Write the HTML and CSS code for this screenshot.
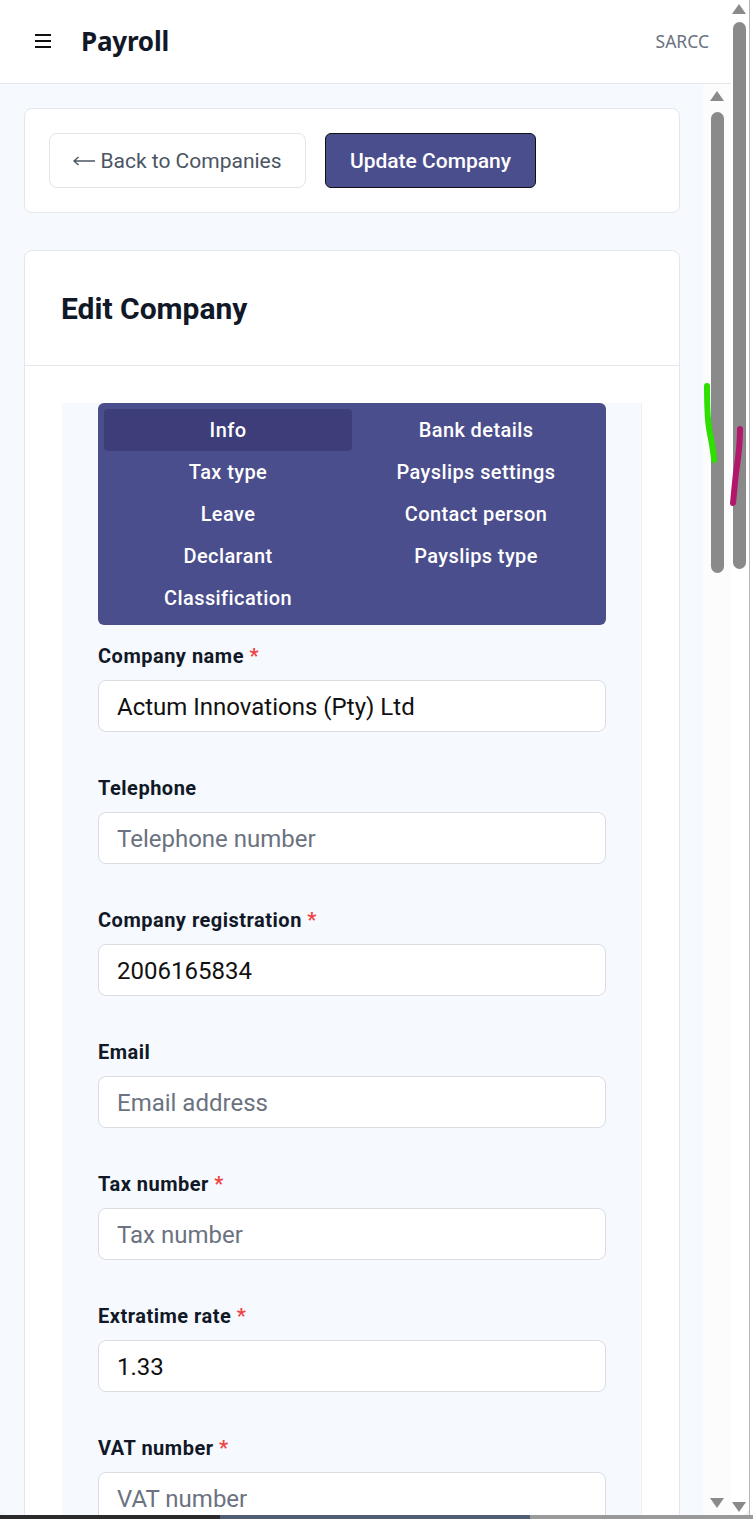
FILE: index.html
```html
<!DOCTYPE html>
<html lang="en">
<head>
<meta charset="utf-8">
<title>Payroll - Edit Company</title>
<link rel="stylesheet" href="styles.css">
</head>
<body>
<div class="desktop">
  <div class="window">
    <div class="app">
      <header class="topbar">
        <div class="brand">
          <svg class="menu-icon" width="18" height="16" viewBox="0 0 18 16" aria-hidden="true">
            <rect x="1" y="1" width="16" height="2" fill="#111"/>
            <rect x="1" y="7" width="16" height="2" fill="#111"/>
            <rect x="1" y="13" width="16" height="2" fill="#111"/>
          </svg>
          <span class="title">Payroll</span>
        </div>
        <span class="org">SARCC</span>
      </header>
      <div class="main">
        <div class="content">
          <div class="card actions">
            <button class="btn btn-outline"><svg class="back-arrow" width="22" height="10" viewBox="0 0 22 10" aria-hidden="true"><path d="M1 5 H22 M5.5 1 L1 5 L5.5 9" stroke="#4b5563" stroke-width="1.4" fill="none"/></svg>Back to Companies</button>
            <button class="btn btn-primary">Update Company</button>
          </div>
          <div class="card edit">
            <div class="card-head"><h1>Edit Company</h1></div>
            <div class="card-body">
              <div class="section">
                <div class="tabs">
                  <div class="tab active">Info</div>
                  <div class="tab">Bank details</div>
                  <div class="tab">Tax type</div>
                  <div class="tab">Payslips settings</div>
                  <div class="tab">Leave</div>
                  <div class="tab">Contact person</div>
                  <div class="tab">Declarant</div>
                  <div class="tab">Payslips type</div>
                  <div class="tab">Classification</div>
                </div>
                <div class="field">
                  <label>Company name <span class="req">*</span></label>
                  <div class="input">Actum Innovations (Pty) Ltd</div>
                </div>
                <div class="field">
                  <label>Telephone</label>
                  <div class="input placeholder">Telephone number</div>
                </div>
                <div class="field">
                  <label>Company registration <span class="req">*</span></label>
                  <div class="input">2006165834</div>
                </div>
                <div class="field">
                  <label>Email</label>
                  <div class="input placeholder">Email address</div>
                </div>
                <div class="field">
                  <label>Tax number <span class="req">*</span></label>
                  <div class="input placeholder">Tax number</div>
                </div>
                <div class="field">
                  <label>Extratime rate <span class="req">*</span></label>
                  <div class="input">1.33</div>
                </div>
                <div class="field">
                  <label>VAT number <span class="req">*</span></label>
                  <div class="input placeholder">VAT number</div>
                </div>
              </div>
            </div>
          </div>
        </div>
        <div class="vscroll inner">
          <span class="arrow up"></span>
          <span class="thumb"></span>
          <span class="spacer"></span>
          <span class="arrow down"></span>
        </div>
      </div>
    </div>
    <div class="vscroll outer">
      <span class="arrow up"></span>
      <span class="thumb"></span>
      <span class="spacer"></span>
      <span class="arrow down"></span>
    </div>
  </div>
  <div class="behind"></div>
  <svg class="marks" width="60" height="140" viewBox="0 0 60 140" aria-hidden="true">
    <path d="M7 8 C7 30 7.5 40 9 50 C10.5 60 13 68 14 82" stroke="#2de000" stroke-width="6" fill="none" stroke-linecap="round"/>
    <path d="M40 51 C40 70 38 82 36 95 C34.5 108 34 116 33 125" stroke="#b3176b" stroke-width="6" fill="none" stroke-linecap="round"/>
  </svg>
</div>
<div class="taskbar"></div>
</body>
</html>
```

FILE: styles.css
```css
* { box-sizing: border-box; }
html, body { margin: 0; padding: 0; }
body {
  width: 753px;
  height: 1519px;
  overflow: hidden;
  background: #2a2a2a;
  font-family: Roboto, "Liberation Sans", sans-serif;
}
.desktop {
  position: relative;
  display: flex;
  height: 1515px;
  background: #f3f3f3;
}
.window {
  width: 749px;
  height: 1515px;
  display: flex;
  background: #ffffff;
  border-radius: 0 0 8px 8px;
  overflow: hidden;
}
.behind {
  flex: 1;
  border-left: 1px solid #b8b8b8;
  background: #ffffff;
}
.taskbar {
  height: 4px;
  background: linear-gradient(90deg, #2a2a2a 0 220px, #4f5d75 220px 530px, #9a9a9a 530px 753px);
}
.app {
  width: 731px;
  display: flex;
  flex-direction: column;
}
.topbar {
  height: 84px;
  flex: none;
  display: flex;
  align-items: center;
  justify-content: space-between;
  padding: 0 22px 2px 34px;
  background: #ffffff;
  border-bottom: 1px solid #e5e7eb;
}
.brand { display: flex; align-items: center; gap: 29px; }
.menu-icon { display: block; }
.title {
  font-family: "Noto Sans", "Open Sans", sans-serif;
  font-weight: 700;
  font-size: 26px;
  color: #111827;
  letter-spacing: -0.2px;
}
.org {
  font-family: "Noto Sans", "Open Sans", sans-serif;
  font-size: 17.5px;
  color: #6b7280;
}
.main {
  flex: 1;
  display: flex;
  min-height: 0;
}
.content {
  width: 703px;
  background: #f6f9fd;
  padding: 24px 23px 0 24px;
  overflow: hidden;
}
.card {
  background: #ffffff;
  border: 1px solid #e5e7eb;
  border-radius: 8px;
}
.actions {
  display: flex;
  gap: 19px;
  padding: 24px;
}
.btn {
  height: 55px;
  border-radius: 8px;
  font-family: Roboto, sans-serif;
  font-size: 21px;
  padding: 0;
  cursor: pointer;
  display: flex;
  align-items: center;
  justify-content: center;
}
.btn-outline {
  background: #ffffff;
  border: 1px solid #e2e4e9;
  color: #4b5563;
  width: 257px;
  gap: 5px;
}
.back-arrow { display: block; margin-top: 1px; }
.btn-primary {
  background: #4b4e8c;
  border: 1px solid #111111;
  color: #ffffff;
  font-weight: 500;
  width: 211px;
  border-radius: 6px;
}
.edit { margin-top: 37px; }
.card-head {
  height: 115px;
  display: flex;
  align-items: center;
  padding: 0 36px;
  border-bottom: 1px solid #e5e7eb;
}
.card-head h1 {
  margin: 0;
  font-size: 30px;
  font-weight: 700;
  color: #111827;
}
.card-body { padding: 37px 37px 0; }
.section {
  background: #f6f9fd;
  box-shadow: inset -1px 0 0 #eef0f4;
  padding: 0 36px 20px;
}
.tabs {
  display: grid;
  grid-template-columns: 1fr 1fr;
  grid-auto-rows: 42px;
  padding: 6px;
  background: #4b4e8c;
  border-radius: 6px;
}
.tab {
  display: flex;
  align-items: center;
  justify-content: center;
  color: #ffffff;
  font-size: 20px;
  font-weight: 500;
  letter-spacing: 0.4px;
  border-radius: 4px;
}
.tab.active { background: #3c3d79; }
.field { padding-top: 19px; padding-bottom: 25px; }
.field label {
  display: block;
  font-size: 20px;
  line-height: 24px;
  font-weight: 700;
  letter-spacing: 0.5px;
  color: #111827;
  margin-bottom: 12px;
}
.req { color: #ef4444; }
.input {
  height: 52px;
  display: flex;
  align-items: center;
  padding: 2px 18px 0;
  background: #ffffff;
  border: 1px solid #d9dce1;
  border-radius: 8px;
  font-size: 24px;
  color: #111111;
}
.input.placeholder { color: #6b7280; }
.vscroll {
  display: flex;
  flex-direction: column;
  align-items: center;
}
.vscroll.inner {
  width: 28px;
  background: #fcfcfc;
  padding: 7px 0 7px 0;
}
.vscroll.outer {
  width: 18px;
  background: #ffffff;
  padding: 4px 2px 3px 0;
}
.arrow {
  width: 0;
  height: 0;
  border-left: 7px solid transparent;
  border-right: 7px solid transparent;
}
.arrow.up { border-bottom: 10px solid #8a8a8a; }
.arrow.down { border-top: 10px solid #8a8a8a; }
.thumb {
  width: 13px;
  border-radius: 7px;
  background: #8a8a8a;
  margin-top: 11px;
}
.inner .thumb { height: 461px; }
.outer .thumb { height: 547px; margin-top: 8px; }
.spacer { flex: 1; }
.marks {
  position: absolute;
  left: 700px;
  top: 378px;
}
```
